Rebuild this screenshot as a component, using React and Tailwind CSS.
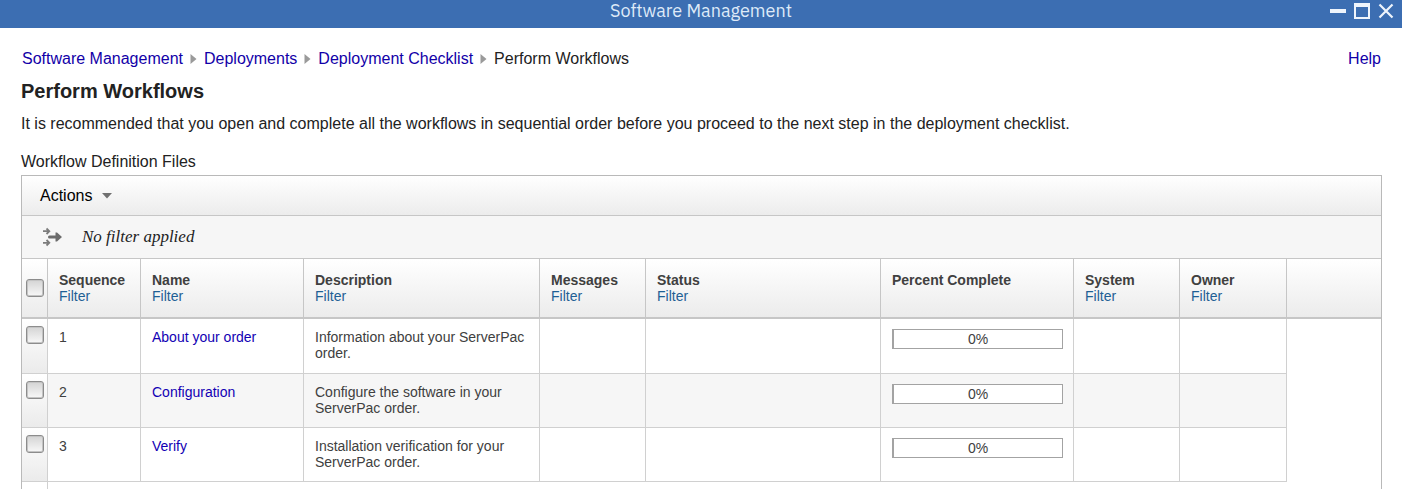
import React from "react";

const crumbs = ["Software Management", "Deployments", "Deployment Checklist"];

const columns = [
  { label: "Sequence", width: "w-[93px]", filter: true },
  { label: "Name", width: "w-[163px]", filter: true },
  { label: "Description", width: "w-[236px]", filter: true },
  { label: "Messages", width: "w-[106px]", filter: true },
  { label: "Status", width: "w-[235px]", filter: true },
  { label: "Percent Complete", width: "w-[193px]", filter: false },
  { label: "System", width: "w-[106px]", filter: true },
  { label: "Owner", width: "w-[107px]", filter: true },
];

const rows = [
  { seq: 1, name: "About your order", description: "Information about your ServerPac order.", percent: 0 },
  { seq: 2, name: "Configuration", description: "Configure the software in your ServerPac order.", percent: 0 },
  { seq: 3, name: "Verify", description: "Installation verification for your ServerPac order.", percent: 0 },
];

const cell = "border-r border-b border-[#d0d0d0] pl-[11px] pr-2 pt-[10px] align-top";

function Check({ label }) {
  return (
    <input
      type="checkbox"
      aria-label={label}
      className="block size-[18px] appearance-none rounded-[3px] border border-[#8c8c8c] bg-linear-to-b from-[#d4d4d4] to-[#f8f8f8] shadow-[inset_0_0_0_1px_#c4c4c4] checked:bg-[#3c6eb2]"
    />
  );
}

function Separator() {
  return (
    <svg aria-hidden="true" className="h-[10px] w-[7px]" viewBox="0 0 7 10">
      <path d="M0.5 0 6.5 5 0.5 10Z" fill="#9a9a9a" />
    </svg>
  );
}

function Progress({ value }) {
  return (
    <div
      role="progressbar"
      aria-label="Percent complete"
      aria-valuenow={value}
      className="flex h-5 items-center justify-center border border-l-2 border-[#a3a3a3] bg-white leading-4"
    >
      {value}%
    </div>
  );
}

export default function App() {
  return (
    <div className="flex min-h-screen flex-col bg-white font-['Liberation_Sans',Arial,sans-serif] text-base leading-5 text-[#222]">
      <header className="grid h-7 grid-cols-[1fr_auto_1fr] items-start bg-[#3c6eb2]">
        <span className="col-start-2 font-['IBM_Plex_Sans','Noto_Sans',sans-serif] text-lg leading-[22px] text-[#dfeaf8]">
          Software Management
        </span>
        <div className="flex justify-end gap-2 pt-[3px] pr-2">
          <button type="button" aria-label="Minimize">
            <svg className="block size-4" viewBox="0 0 16 16"><path d="M0 6h16v4H0z" fill="#eef4fc" /></svg>
          </button>
          <button type="button" aria-label="Maximize">
            <svg className="block size-4" viewBox="0 0 16 16">
              <path fillRule="evenodd" d="M0 0h16v16H0zM2 4v10h12V4z" fill="#eef4fc" />
            </svg>
          </button>
          <button type="button" aria-label="Close">
            <svg className="block size-4" viewBox="0 0 16 16">
              <path d="M1.5 1.5l13 13M14.5 1.5l-13 13" stroke="#eef4fc" strokeWidth="2.2" />
            </svg>
          </button>
        </div>
      </header>

      <main className="flex flex-1 flex-col pl-[21px] pr-5 pt-[21px]">
        <div className="flex justify-between pl-px pr-px">
          <nav aria-label="Breadcrumb" className="flex items-center gap-[7px]">
            {crumbs.map((c) => (
              <React.Fragment key={c}>
                <a href="#" className="text-[#1200a8]">{c}</a>
                <Separator />
              </React.Fragment>
            ))}
            <span>Perform Workflows</span>
          </nav>
          <a href="#" className="text-[#1200a8]">Help</a>
        </div>
        <h1 className="mt-[10px] text-xl leading-6 font-bold">Perform Workflows</h1>
        <p className="mt-[11px]">
          It is recommended that you open and complete all the workflows in sequential order before you proceed to the
          next step in the deployment checklist.
        </p>
        <h2 className="mt-[18px] mb-[3px]">Workflow Definition Files</h2>

        <section className="flex flex-1 flex-col border border-b-0 border-[#b9b9b9]">
          <div className="flex h-10 items-center border-b border-[#c6c6c6] bg-linear-to-b from-white to-[#ececec] pl-[18px]">
            <button type="button" className="flex items-center gap-[10px] text-black">
              Actions
              <svg aria-hidden="true" className="h-[6px] w-[10px]" viewBox="0 0 10 6">
                <path d="M0 0h10L5 5.5z" fill="#707070" />
              </svg>
            </button>
          </div>
          <div className="flex h-[43px] items-center gap-5 border-b border-[#c6c6c6] bg-[#f6f6f6] pb-px pl-5">
            <svg aria-hidden="true" className="h-5 w-5" viewBox="0 0 20 20" fill="none">
              <path d="M1 4.2h6M4.5 1.5 7.3 4.2 4.500 7M1 15.800h6M4.500 13l2.800 2.800-2.800 2.700" stroke="#7c7c7c" strokeWidth="1.800" />
              <path d="M7.500 8.500h6V5.500h1.500l5 4.500-5 4.500h-1.500v-3h-6a1.500 1.500 0 0 1 0-3z" fill="#6c6c6c" />
            </svg>
            <span className="font-[Georgia,'Liberation_Serif',serif] text-[17px] leading-6 italic">No filter applied</span>
          </div>

          <table className="w-full table-fixed border-separate border-spacing-0 text-left text-sm leading-4 text-[#404040]">
            <thead>
              <tr className="h-[60px] bg-linear-to-b from-white to-[#ebebeb]">
                <th className="w-[26px] border-r border-b-2 border-[#c6c6c6] pl-1">
                  <Check label="Select all" />
                </th>
                {columns.map((c) => (
                  <th key={c.label} className={`${c.width} border-r border-b-2 border-[#c6c6c6] pt-[13px] pl-[11px] align-top`}>
                    <span className="block">{c.label}</span>
                    {c.filter && <a href="#" className="block font-normal text-[#1f5f95]">Filter</a>}
                  </th>
                ))}
                <td className="border-b-2 border-[#c6c6c6]" />
              </tr>
            </thead>
            <tbody>
              {rows.map((r) => (
                <tr key={r.seq} className="h-[54px] first:h-[55px] even:bg-[#f6f6f6]">
                  <td className="border-r border-b border-[#d0d0d0] bg-linear-to-b from-white to-[#ebebeb] pt-[7px] pl-1 align-top">
                    <Check label={`Select ${r.name}`} />
                  </td>
                  <td className={cell}>{r.seq}</td>
                  <td className={cell}><a href="#" className="text-[#1200b4]">{r.name}</a></td>
                  <td className={cell}>{r.description}</td>
                  <td className={cell} />
                  <td className={cell} />
                  <td className="border-r border-b border-[#d0d0d0] px-[10px] pt-[10px] pl-[11px] align-top">
                    <Progress value={r.percent} />
                  </td>
                  <td className={cell} />
                  <td className={cell} />
                  <td className="bg-white" />
                </tr>
              ))}
            </tbody>
          </table>
          <div className="w-[26px] flex-1 border-r border-[#d0d0d0]" />
        </section>
      </main>
    </div>
  );
}
